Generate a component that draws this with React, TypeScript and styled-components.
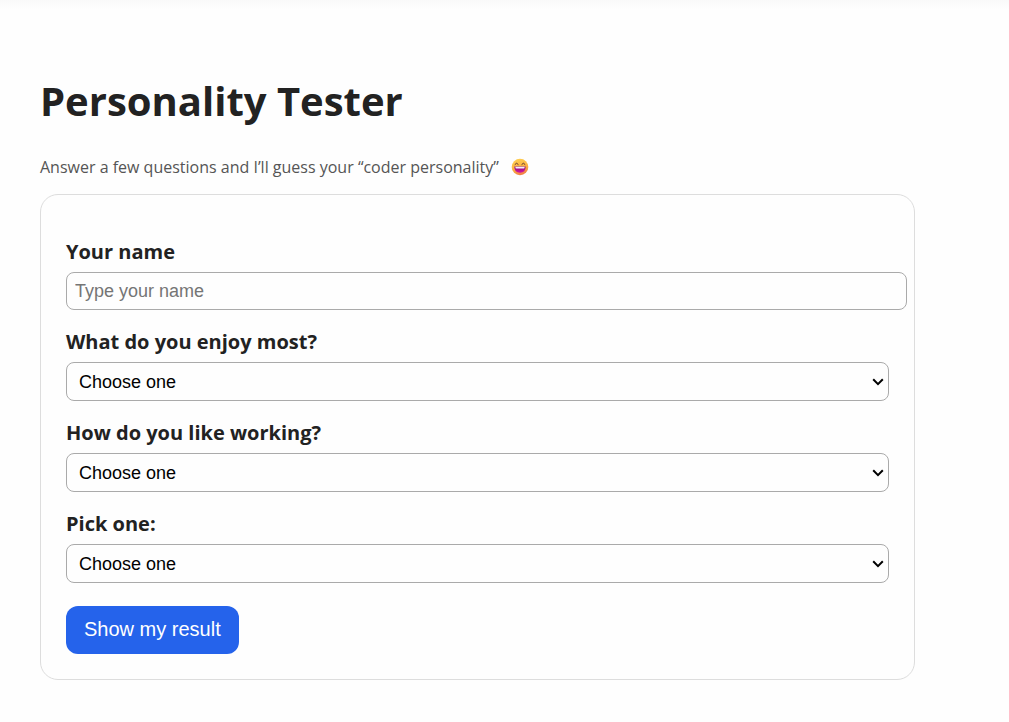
import React from "react";
import styled, { createGlobalStyle } from "styled-components";

const GlobalStyle = createGlobalStyle`
  body {
    margin: 0;
    background: #fefefe;
    color: #222;
    font-family: "Open Sans", "Noto Sans", sans-serif;
  }
`;

const Page = styled.main`
  padding: 0 40px 40px;
`;

const TopShade = styled.div`
  height: 10px;
  margin: 0 -40px;
  background: linear-gradient(#f9f9f9, #fefefe);
`;

const Content = styled.div`
  max-width: 875px;
  padding-top: 64px;
`;

const Title = styled.h1`
  margin: 0;
  font-size: 40px;
  line-height: 54px;
  font-weight: 700;
`;

const Intro = styled.p`
  display: flex;
  align-items: center;
  gap: 12px;
  margin: 27px 0 15px;
  font-size: 16px;
  line-height: 24px;
  color: #555;
`;

const Card = styled.form`
  padding: 25px;
  border: 1px solid #ddd;
  border-radius: 18px;
`;

const Label = styled.label`
  display: block;
  margin: 20px 0 8px;
  font-size: 20px;
  line-height: 24px;
  font-weight: 700;
`;

const TextInput = styled.input`
  display: block;
  box-sizing: content-box;
  width: 100%;
  height: 20px;
  padding: 8px;
  border: 1px solid #aaa;
  border-radius: 8px;
  background: #fefefe;
  font: 18px "Liberation Sans", Arial, sans-serif;

  &::placeholder {
    color: #757575;
  }
`;

const SelectWrap = styled.div`
  position: relative;
`;

const Select = styled.select`
  appearance: none;
  display: block;
  width: 100%;
  height: 39px;
  padding: 8px 24px 8px 12px;
  border: 1px solid #aaa;
  border-radius: 8px;
  background: #fefefe;
  color: #000;
  font: 18px "Liberation Sans", Arial, sans-serif;
`;

const Arrow = styled.svg`
  position: absolute;
  right: 5px;
  top: 16px;
  pointer-events: none;
`;

const SubmitButton = styled.button`
  display: block;
  height: 48px;
  margin-top: 23px;
  padding: 0 18px 2px;
  border: 0;
  border-radius: 12px;
  background: #2563eb;
  color: #fff;
  font: 20px "Liberation Sans", Arial, sans-serif;
  cursor: pointer;
`;

const Grin = () => (
  <svg width="18" height="18" viewBox="0 0 18 18" role="img" aria-label="Grinning face">
    <defs>
      <linearGradient id="face" x1="0.3" y1="0" x2="0.6" y2="1">
        <stop offset="0" stopColor="#ffd052" />
        <stop offset="0.55" stopColor="#fbb040" />
        <stop offset="1" stopColor="#f07a48" />
      </linearGradient>
      <linearGradient id="mouth" x1="0" y1="0" x2="0" y2="1">
        <stop offset="0" stopColor="#8a1078" />
        <stop offset="1" stopColor="#d414a8" />
      </linearGradient>
    </defs>
    <circle cx="9" cy="9" r="8.3" fill="url(#face)" />
    <path d="M4 6.3Q5.6 3.9 7.2 6.3M10.8 6.3Q12.4 3.9 14 6.3" fill="none" stroke="#5e3531" strokeWidth="1" strokeLinecap="round" />
    <path d="M3.3 8.6H14.7Q14.6 14.8 9 14.8T3.3 8.6Z" fill="url(#mouth)" />
    <path d="M4.2 8.8H13.8L13.2 10.6H4.8Z" fill="#f4eef8" />
  </svg>
);

const questions = [
  { id: "enjoy", text: "What do you enjoy most?", options: ["Design", "Logic", "Teamwork"] },
  { id: "working", text: "How do you like working?", options: ["Alone", "In a pair", "In a group"] },
  { id: "pick", text: "Pick one:", options: ["Coffee", "Tea", "Water"] },
];

export default function App() {
  return (
    <Page>
      <GlobalStyle />
      <TopShade />
      <Content>
        <Title>Personality Tester</Title>
        <Intro>
          Answer a few questions and I’ll guess your “coder personality”
          <Grin />
        </Intro>
        <Card onSubmit={(e) => e.preventDefault()}>
          <Label htmlFor="name">Your name</Label>
          <TextInput id="name" type="text" placeholder="Type your name" />
          {questions.map((q) => (
            <React.Fragment key={q.id}>
              <Label htmlFor={q.id}>{q.text}</Label>
              <SelectWrap>
                <Select id={q.id} defaultValue="">
                  <option value="">Choose one</option>
                  {q.options.map((o) => (
                    <option key={o}>{o}</option>
                  ))}
                </Select>
                <Arrow width="12" height="8" viewBox="0 0 12 8" aria-hidden="true">
                  <path d="M1.2 1.3L6 6.1L10.8 1.3" fill="none" stroke="#000" strokeWidth="2" />
                </Arrow>
              </SelectWrap>
            </React.Fragment>
          ))}
          <SubmitButton type="submit">Show my result</SubmitButton>
        </Card>
      </Content>
    </Page>
  );
}
